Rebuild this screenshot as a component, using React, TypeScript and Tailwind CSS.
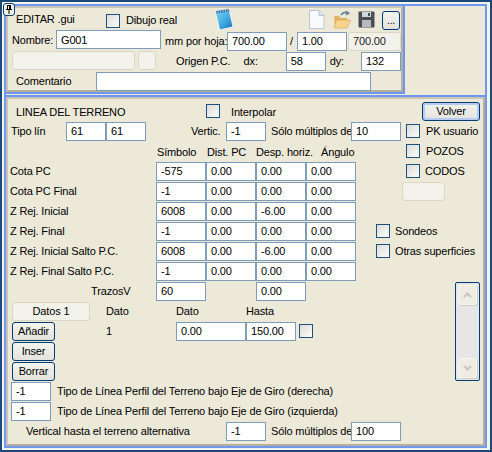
import type { ReactNode } from "react";

const tableRows = [
  { label: "Cota PC", values: ["-575", "0.00", "0.00", "0.00"] },
  { label: "Cota PC Final", values: ["-1", "0.00", "0.00", "0.00"] },
  { label: "Z Rej. Inicial", values: ["6008", "0.00", "-6.00", "0.00"] },
  { label: "Z Rej. Final", values: ["-1", "0.00", "0.00", "0.00"] },
  { label: "Z Rej. Inicial Salto P.C.", values: ["6008", "0.00", "-6.00", "0.00"] },
  { label: "Z Rej. Final Salto P.C.", values: ["-1", "0.00", "0.00", "0.00"] },
];

function Field({ value, className = "" }: { value: string; className?: string }) {
  return (
    <input
      readOnly
      value={value}
      className={`h-[19px] shrink-0 border border-[#7F9DB9] bg-white pl-[4px] text-black outline-none ${className}`}
    />
  );
}

function Check({ className = "" }: { className?: string }) {
  return (
    <span
      className={`block h-[14px] w-[14px] shrink-0 border border-[#1C5180] bg-gradient-to-br from-[#dcdcd7] to-[#fbfbf9] ${className}`}
    />
  );
}

function Disabled({ className = "", children }: { className?: string; children?: ReactNode }) {
  return (
    <div
      className={`flex h-[19px] shrink-0 items-center justify-center rounded-[3px] border border-[#DAD7C6] bg-[#F3F2EA] ${className}`}
    >
      {children}
    </div>
  );
}

function Btn({ className = "", children }: { className?: string; children: ReactNode }) {
  return (
    <button className={`flex h-[19px] shrink-0 items-center justify-center rounded-[3px] border border-[#003C74] bg-gradient-to-b from-[#F4F4EF] to-[#E3E3DC] text-black ${className}`}>
      {children}
    </button>
  );
}

function Row({ className = "", children }: { className?: string; children: ReactNode }) {
  return <div className={`flex h-5 shrink-0 items-center whitespace-nowrap ${className}`}>{children}</div>;
}

function NotepadIcon() {
  return (
    <svg width="20" height="23" viewBox="0 0 20 23" className="shrink-0">
      <defs>
        <linearGradient id="pad" x1="0" y1="0" x2="1" y2="1">
          <stop offset="0" stopColor="#7FD3EE" />
          <stop offset="0.55" stopColor="#3FA9E0" />
          <stop offset="1" stopColor="#1D6FB8" />
        </linearGradient>
      </defs>
      <path d="M1 3 L15 1 L19.5 19 L5 22.5 Z" fill="#F4F6F8" />
      <path d="M2 5 L15 3 L18.5 18.5 L6 21.5 Z" fill="url(#pad)" />
      <path d="M2 3 L15 1 L15.5 3.5 L2.5 5.5 Z" fill="#2F6DA8" />
      <path d="M4 3 V5 M6.5 2.6 V4.6 M9 2.2 V4.2 M11.5 1.9 V3.9 M14 1.5 V3.5" stroke="#D8E6F2" strokeWidth=".8" />
    </svg>
  );
}

function DocIcon() {
  return (
    <svg width="17" height="19" viewBox="0 0 17 19" className="shrink-0">
      <path d="M1.5 .5 H11 L16 5.5 V18.5 H1.5 Z" fill="#F8FAFD" stroke="#B9C4D6" />
      <path d="M11 .5 V5.5 H16" fill="#DDE5F0" stroke="#B9C4D6" />
    </svg>
  );
}

function FolderIcon() {
  return (
    <svg width="18" height="19" viewBox="0 0 18 19" className="shrink-0">
      <path d="M1 6 H6 L7.5 8 H14 V18 H2 Z" fill="#E3B464" />
      <path d="M3.5 10 H17.5 L14 18 H1 Z" fill="#F6D48C" stroke="#DDAA58" strokeWidth=".7" />
      <path d="M8 5 Q11 1 14.5 3" fill="none" stroke="#5F7F96" strokeWidth="1.6" />
      <path d="M13.5 .5 L17 3.5 L13 5.5 Z" fill="#5F7F96" />
    </svg>
  );
}

function SaveIcon() {
  return (
    <svg width="17" height="17" viewBox="0 0 17 17" className="shrink-0">
      <rect x=".5" y=".5" width="16" height="16" rx="1" fill="#4A4F55" />
      <rect x="4" y="1" width="9" height="5" fill="#D3D6DA" />
      <rect x="4" y="9" width="9" height="7" fill="#B6BABF" />
      <rect x="10" y="2" width="2" height="3" fill="#4A4F55" />
    </svg>
  );
}

function PinIcon() {
  return (
    <div className="absolute left-[1px] top-[1px] flex h-[13px] w-[12px] items-center justify-center rounded-[3px] border border-[#0F3F70] bg-[#F1F1EA]">
      <svg width="8" height="9" viewBox="0 0 8 9">
        <path d="M2 0 H6 V4 H7 V5 H1 V4 H2 Z M3 1 V4 H4 V1 Z M3.5 5 H4.5 V9 H3.5 Z" fill="#000" fillRule="evenodd" />
      </svg>
    </div>
  );
}

function ScrollArrow({ up }: { up?: boolean }) {
  return (
    <div className="flex h-[20px] w-[19px] items-center justify-center rounded-[2px] border border-[#F6F5EF] bg-[#EEEDE4] shadow-[1px_1px_0_#CFCDBE]">
      <svg width="9" height="6" viewBox="0 0 9 6">
        <path d={up ? "M1 5 L4.5 1.5 L8 5" : "M1 1 L4.5 4.5 L8 1"} fill="none" stroke="#C9C7BA" strokeWidth="2" />
      </svg>
    </div>
  );
}

export default function App() {
  return (
    <div
      className="relative h-[452px] w-[492px] overflow-hidden border-2 border-[#1B4A7A] bg-[#F4F3EC] p-[2px] text-[11px] leading-none tracking-[-0.15px] text-black"
      style={{ fontFamily: '"Liberation Sans", Arial, sans-serif' }}
    >
      <PinIcon />
      <div className="flex h-[444px] w-[483px] flex-col border-2 border-[#7197EE] bg-[#ECE9D8]">
        {/* panel superior */}
        <div className="h-[88px] w-[399px] shrink-0 border-b-2 border-r-2 border-[#6F96EE]">
          <div className="h-full border-b-2 border-l-2 border-r-2 border-t-2 border-b-[#B5B09E] border-l-[#C9C5B4] border-r-[#B5B09E] border-t-[#C9C5B4]">
            <div className="flex h-[22px] items-center whitespace-nowrap">
              <span className="ml-[8px] mt-[1px] w-[90px]">EDITAR .gui</span>
              <Check className="mt-[3px]" />
              <span className="ml-[6px] mt-[3px] w-[88px]">Dibujo real</span>
              <NotepadIcon />
              <span className="w-[74px]" />
              <DocIcon />
              <span className="w-[8px]" />
              <FolderIcon />
              <span className="w-[7px]" />
              <SaveIcon />
              <span className="w-[7px]" />
              <Btn className="mt-[3px] h-[18px] w-[18px] text-[10px]">...</Btn>
            </div>
            <Row>
              <span className="ml-[4px] w-[44px]">Nombre:</span>
              <Field value="G001" className="mb-[1px] w-[105px]" />
              <span className="ml-[4px] mt-[2px] w-[62px]">mm por hoja:</span>
              <Field value="700.00" className="mt-[2px] w-[60px]" />
              <span className="ml-[3px] mt-[2px] w-[7px]">/</span>
              <Field value="1.00" className="mt-[2px] w-[50px]" />
              <Disabled className="ml-[1px] mt-[2px] w-[53px] !justify-start pl-[4px] text-[#222]">700.00</Disabled>
            </Row>
            <Row>
              <Disabled className="ml-[4px] w-[123px]" />
              <Disabled className="ml-[3px] w-[18px]" />
              <span className="ml-[20px] mt-[2px] w-[69px]">Origen P.C.</span>
              <span className="mt-[2px] w-[43px]">dx:</span>
              <Field value="58" className="mt-[2px] w-[40px]" />
              <span className="ml-[4px] mt-[2px] w-[32px]">dy:</span>
              <Field value="132" className="mt-[2px] w-[40px]" />
            </Row>
            <Row>
              <span className="ml-[8px] mt-[2px] w-[80px]">Comentario</span>
              <Field value="" className="mt-[2px] w-[275px]" />
            </Row>
          </div>
        </div>

        {/* panel inferior */}
        <div className="mt-[1px] flex-1 border-t-2 border-[#6F96EE]">
          <div className="h-full border-b-2 border-l-2 border-r-2 border-t-2 border-b-[#B5B09E] border-l-[#C9C5B4] border-r-[#B5B09E] border-t-[#C9C5B4] pt-[2px]">
            <Row>
              <span className="ml-[8px] mt-[2px] w-[190px]">LINEA DEL TERRENO</span>
              <Check className="" />
              <span className="ml-[11px] mt-[2px] w-[191px]">Interpolar</span>
              <Btn className="w-[58px] from-[#F2F2EE] to-[#DCDCD6] shadow-[inset_0_0_0_2px_#B7CBF2]">Volver</Btn>
            </Row>
            <Row>
              <span className="ml-[3px] w-[55px]">Tipo lín</span>
              <Field value="61" className="w-[40px]" />
              <Field value="61" className="w-[40px]" />
              <span className="ml-[45px] w-[35px]">Vertic.</span>
              <Field value="-1" className="w-[40px]" />
              <span className="ml-[5px] w-[80px]">Sólo múltiplos de</span>
              <Field value="10" className="w-[50px]" />
              <Check className="ml-[5px]" />
              <span className="ml-[6px]">PK usuario</span>
            </Row>
            <Row>
              <span className="ml-[149px] mt-[2px] w-[50px]">Símbolo</span>
              <span className="mt-[2px] w-[49px]">Dist. PC</span>
              <span className="mt-[2px] w-[65px]">Desp. horiz.</span>
              <span className="mt-[2px] w-[85px]">Ángulo</span>
              <Check />
              <span className="ml-[6px]">POZOS</span>
            </Row>
            {tableRows.map((row, i) => (
              <Row key={row.label}>
                <span className="ml-[2px] w-[146px]">{row.label}</span>
                {row.values.map((v, j) => (
                  <Field key={j} value={v} className="w-[50px]" />
                ))}
                {i === 0 && (
                  <>
                    <Check className="ml-[50px]" />
                    <span className="ml-[5px]">CODOS</span>
                  </>
                )}
                {i === 1 && <Disabled className="ml-[46px] w-[43px]" />}
                {i === 3 && (
                  <>
                    <Check className="ml-[20px]" />
                    <span className="ml-[5px]">Sondeos</span>
                  </>
                )}
                {i === 4 && (
                  <>
                    <Check className="ml-[20px]" />
                    <span className="ml-[5px]">Otras superficies</span>
                  </>
                )}
              </Row>
            ))}
            <div className="flex">
              <div className="w-[447px] shrink-0">
                <Row>
                  <span className="ml-[83px] w-[65px]">TrazosV</span>
                  <Field value="60" className="w-[50px]" />
                  <Field value="0.00" className="ml-[50px] w-[50px]" />
                </Row>
                <Row>
                  <Disabled className="ml-[4px] w-[78px]">Datos 1</Disabled>
                  <span className="ml-[16px] w-[70px]">Dato</span>
                  <span className="w-[70px]">Dato</span>
                  <span>Hasta</span>
                </Row>
                <Row>
                  <Btn className="ml-[4px] w-[43px]">Añadir</Btn>
                  <span className="ml-[51px] w-[70px]">1</span>
                  <Field value="0.00" className="w-[70px]" />
                  <Field value="150.00" className="w-[50px]" />
                  <Check className="ml-[3px]" />
                </Row>
                <Row>
                  <Btn className="ml-[4px] w-[43px]">Inser</Btn>
                </Row>
                <Row>
                  <Btn className="ml-[4px] w-[43px]">Borrar</Btn>
                </Row>
              </div>
              <div className="mt-[1px] flex h-[99px] w-[25px] shrink-0 flex-col items-center justify-between rounded-[2px] border border-[#003C74] bg-[#E6E6E6] py-[2px]">
                <ScrollArrow up />
                <ScrollArrow />
              </div>
            </div>
            <Row>
              <Field value="-1" className="ml-[3px] w-[40px]" />
              <span className="ml-[6px]">Tipo de Línea Perfil del Terreno bajo Eje de Giro (derecha)</span>
            </Row>
            <Row>
              <Field value="-1" className="ml-[3px] w-[40px]" />
              <span className="ml-[6px]">Tipo de Línea Perfil del Terreno bajo Eje de Giro (izquierda)</span>
            </Row>
            <Row>
              <span className="ml-[18px] w-[200px]">Vertical hasta el terreno alternativa</span>
              <Field value="-1" className="w-[40px]" />
              <span className="ml-[5px] w-[80px]">Sólo múltiplos de</span>
              <Field value="100" className="w-[50px]" />
            </Row>
          </div>
        </div>
      </div>
    </div>
  );
}
